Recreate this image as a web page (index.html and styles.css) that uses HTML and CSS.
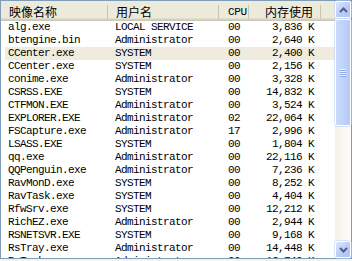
FILE: index.html
```html
<!DOCTYPE html>
<html>
<head>
<meta charset="utf-8">
<link rel="stylesheet" href="styles.css">
</head>
<body>
<div class="lv">
  <div class="main">
    <div class="hdr">
      <div class="hc c1 cjk">映像名称</div>
      <div class="hc c2 cjk">用户名</div>
      <div class="hc c3 lat">CPU</div>
      <div class="hc c4 cjk right">内存使用</div>
      <div class="hc c5"></div>
    </div>
    <div class="rows">
      <div class="row"><span>alg.exe</span><span>LOCAL SERVICE</span><span>00</span><span class="mem">3,836 K</span></div>
      <div class="row"><span>btengine.bin</span><span>Administrator</span><span>00</span><span class="mem">2,640 K</span></div>
      <div class="row sel"><span>CCenter.exe</span><span>SYSTEM</span><span>00</span><span class="mem">2,400 K</span></div>
      <div class="row"><span>CCenter.exe</span><span>SYSTEM</span><span>00</span><span class="mem">2,156 K</span></div>
      <div class="row"><span>conime.exe</span><span>Administrator</span><span>00</span><span class="mem">3,328 K</span></div>
      <div class="row"><span>CSRSS.EXE</span><span>SYSTEM</span><span>00</span><span class="mem">14,832 K</span></div>
      <div class="row"><span>CTFMON.EXE</span><span>Administrator</span><span>00</span><span class="mem">3,524 K</span></div>
      <div class="row"><span>EXPLORER.EXE</span><span>Administrator</span><span>02</span><span class="mem">22,064 K</span></div>
      <div class="row"><span>FSCapture.exe</span><span>Administrator</span><span>17</span><span class="mem">2,996 K</span></div>
      <div class="row"><span>LSASS.EXE</span><span>SYSTEM</span><span>00</span><span class="mem">1,804 K</span></div>
      <div class="row"><span>qq.exe</span><span>Administrator</span><span>00</span><span class="mem">22,116 K</span></div>
      <div class="row"><span>QQPenguin.exe</span><span>Administrator</span><span>00</span><span class="mem">7,236 K</span></div>
      <div class="row"><span>RavMonD.exe</span><span>SYSTEM</span><span>00</span><span class="mem">8,252 K</span></div>
      <div class="row"><span>RavTask.exe</span><span>SYSTEM</span><span>00</span><span class="mem">4,404 K</span></div>
      <div class="row"><span>RfwSrv.exe</span><span>SYSTEM</span><span>00</span><span class="mem">12,212 K</span></div>
      <div class="row"><span>RichEZ.exe</span><span>Administrator</span><span>00</span><span class="mem">2,944 K</span></div>
      <div class="row"><span>RSNETSVR.EXE</span><span>SYSTEM</span><span>00</span><span class="mem">9,168 K</span></div>
      <div class="row"><span>RsTray.exe</span><span>Administrator</span><span>00</span><span class="mem">14,448 K</span></div>
      <div class="row"><span>RsTask.exe</span><span>Administrator</span><span>00</span><span class="mem">16,740 K</span></div>
    </div>
  </div>
  <div class="sb">
    <div class="btn">
      <svg width="9" height="6" viewBox="0 0 9 6"><path d="M1 5 L4.5 1.5 L8 5" fill="none" stroke="#4d6185" stroke-width="2"/></svg>
    </div>
    <div class="thumb">
      <div class="grip"><i></i><i></i><i></i><i></i></div>
    </div>
    <div class="track"></div>
    <div class="btn">
      <svg width="9" height="6" viewBox="0 0 9 6"><path d="M1 1 L4.5 4.5 L8 1" fill="none" stroke="#4d6185" stroke-width="2"/></svg>
    </div>
  </div>
</div>
</body>
</html>
```
FILE: styles.css
```css
html, body {
  margin: 0;
  padding: 0;
}
body {
  background: #f4f3ee;
  width: 352px;
  height: 261px;
  overflow: hidden;
}
.lv {
  display: flex;
  width: 352px;
  height: 259px;
  box-sizing: border-box;
  border: 1px solid #7f9db9;
  background: #fff;
}
.main {
  flex: 1;
  display: flex;
  flex-direction: column;
  overflow: hidden;
}
.hdr {
  height: 20px;
  flex: none;
  display: grid;
  grid-template-columns: 107px 111px 30px 72px 1fr;
  align-items: start;
  padding-top: 4px;
  box-sizing: border-box;
  background: #ebeadb;
  box-shadow: inset 0 -1px #cbc7b8, inset 0 -2px #d6d2c2, inset 0 -3px #e2decd;
}
.hc {
  height: 14px;
  line-height: 14px;
  box-sizing: border-box;
  border-right: 1px solid #c7c5b2;
  color: #000;
  white-space: nowrap;
}
.hc.c5 { border-right: none; }
.cjk {
  font-family: "Noto Sans CJK SC", sans-serif;
  font-size: 12px;
}
.lat {
  font-family: "Liberation Mono", monospace;
  font-size: 11px;
  letter-spacing: -0.4px;
}
.c1 { padding-left: 8px; }
.c2 { padding-left: 8px; }
.c3 { padding-left: 9px; }
.c4 { padding-right: 7px; }
.right { text-align: right; }

.rows {
  flex: 1;
  overflow: hidden;
  font-family: "Liberation Mono", "Noto Sans CJK SC", monospace;
  font-size: 11px;
  letter-spacing: -0.6px;
  color: #000;
}
.row {
  display: grid;
  grid-template-columns: 107px 111px 30px 72px;
  height: 13px;
  line-height: 13px;
  white-space: nowrap;
}
.row span { overflow: hidden; }
.row span:nth-child(1) { padding-left: 7px; }
.row span:nth-child(2) { padding-left: 7px; }
.row span:nth-child(3) { padding-left: 9px; }
.row span.mem { text-align: right; padding-right: 7px; }
.row.sel {
  background: linear-gradient(to right, transparent 4px, #efecdf 4px);
}

.sb {
  width: 16px;
  flex: none;
  display: flex;
  flex-direction: column;
  background: linear-gradient(to right, #f3f1e8, #fefefb);
}
.btn {
  height: 17px;
  box-sizing: border-box;
  border: 1px solid #fff;
  border-radius: 2px;
  background: linear-gradient(135deg, #dbe5fd, #b7cbf7 60%, #aec4f5);
  box-shadow: 0 0 0 0.5px #b9cdf6;
  display: flex;
  align-items: center;
  justify-content: center;
  flex: none;
}
.thumb {
  height: 107px;
  flex: none;
  margin-top: 1px;
  box-sizing: border-box;
  border: 1px solid #fff;
  border-radius: 2px;
  background: linear-gradient(to right, #cbd9fc, #bfd1fa 60%, #b5c9f6);
  box-shadow: 0 0 0 0.5px #b4c8f4;
  display: flex;
  align-items: center;
  justify-content: center;
}
.grip {
  display: flex;
  flex-direction: column;
}
.grip i {
  display: block;
  width: 6px;
  height: 1px;
  background: #eef3fe;
  border-bottom: 1px solid #8fa9e6;
}
.track { flex: 1; }
```
